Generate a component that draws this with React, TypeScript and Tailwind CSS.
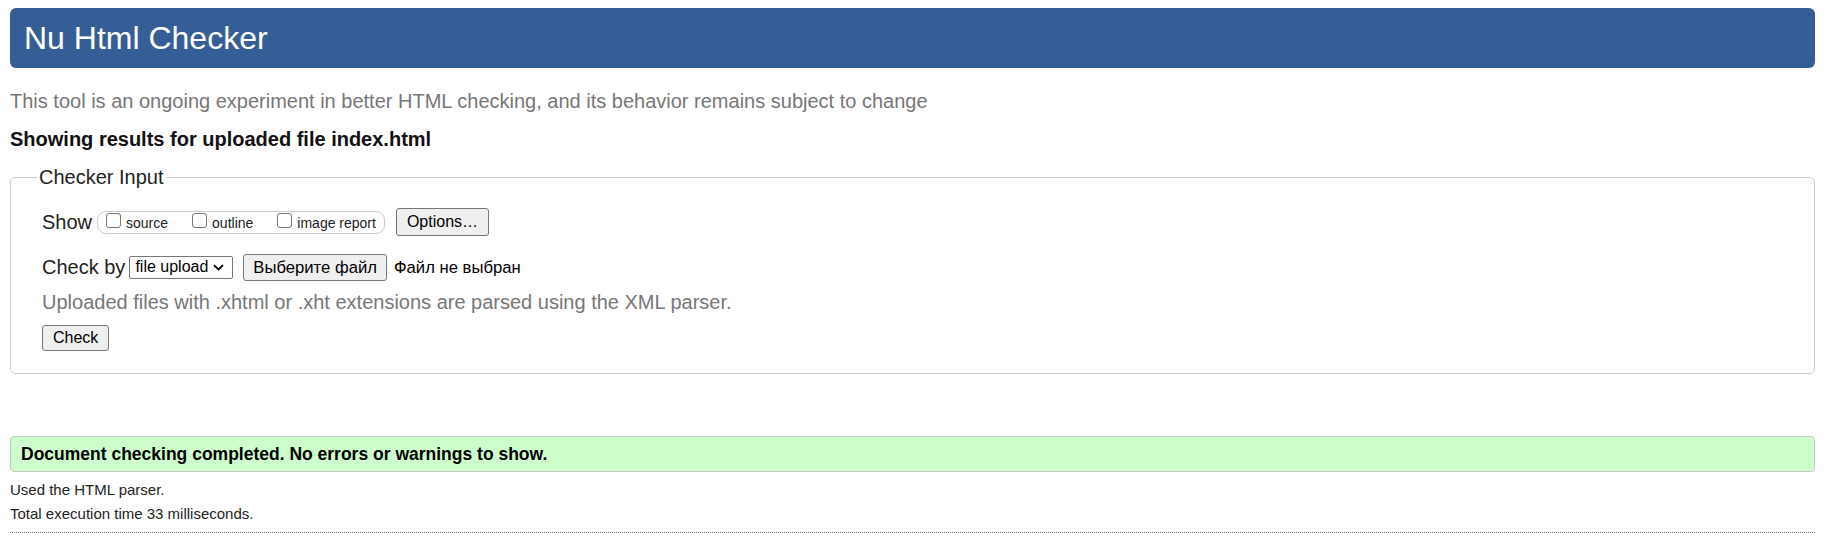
import { useState } from 'react';

export default function App() {
  const [show, setShow] = useState({ source: false, outline: false, image: false });

  return (
    <div className="min-h-screen bg-white pl-[10px] pr-[18px] pt-[8px] font-['Liberation_Sans',Arial,sans-serif] text-[#222]">
      {/* Header */}
      <header className="flex h-[60px] items-center rounded-[6px] bg-[#365e96] px-[14px]">
        <h1 className="text-[32px] font-normal leading-none text-white">Nu Html Checker</h1>
      </header>

      <p className="mt-[22px] text-[20px] leading-[23px] text-[#777]">
        This tool is an ongoing experiment in better HTML checking, and its behavior remains subject to change
      </p>
      <p className="mt-[15px] text-[20px] font-bold leading-[23px] text-[#111]">Showing results for uploaded file index.html</p>

      {/* Checker Input */}
      <fieldset className="mt-[15px] rounded-[5px] border border-[#ccc] px-[31px] pb-[22px]">
        <legend className="-ml-[5px] px-[2px] text-[20px] leading-[23px]">Checker Input</legend>

        <div className="mt-[19px] flex h-[28px] items-center">
          <span className="text-[20px] leading-[23px]">Show</span>
          <div className="ml-[5px] flex h-[23px] items-center rounded-[9px] border border-[#ccc] px-[8px] text-[14px] leading-[16px]">
            {([
              ['source', 'source'],
              ['outline', 'outline'],
              ['image', 'image report'],
            ] as const).map(([key, label], idx) => (
              <label key={key} className={`flex items-center ${idx > 0 ? 'ml-[24px]' : ''}`}>
                <input
                  type="checkbox"
                  checked={show[key]}
                  onChange={() => setShow({ ...show, [key]: !show[key] })}
                  className="-mt-[4px] h-[15px] w-[15px] appearance-none rounded-[3px] border border-[#767676] bg-white"
                />
                <span className="ml-[5px] mt-[2px]">{label}</span>
              </label>
            ))}
          </div>
          <button className="ml-[11px] h-[28px] rounded-[3px] border border-[#767676] bg-[#efefef] px-[10px] text-[16px] text-black">
            Options…
          </button>
        </div>

        <div className="mt-[18px] flex h-[26px] items-center">
          <span className="text-[20px] leading-[23px]">Check by</span>
          <div className="ml-[4px] flex h-[23px] items-center rounded-[2px] border border-[#767676] bg-white pl-[5px] pr-[8px] text-[16px] text-black">
            file upload
            <svg className="ml-[5px]" width="11" height="7" viewBox="0 0 11 7" fill="none">
              <path d="M1 1.2 5.5 5.5 10 1.2" stroke="#000" strokeWidth="1.8" />
            </svg>
          </div>
          <button className="ml-[10px] h-[27px] rounded-[3px] border border-[#767676] bg-[#efefef] px-[9px] text-[16.67px] text-black">
            Выберите файл
          </button>
          <span className="ml-[7px] text-[16.67px] text-black">Файл не выбран</span>
        </div>

        <p className="mt-[11px] text-[20px] leading-[23px] text-[#777]">
          Uploaded files with .xhtml or .xht extensions are parsed using the XML parser.
        </p>

        <button className="mt-[11px] h-[26px] rounded-[3px] border border-[#767676] bg-[#efefef] px-[10px] text-[16px] text-black">
          Check
        </button>
      </fieldset>

      {/* Result */}
      <div className="mt-[62px] flex h-[36px] items-center rounded-[4px] border border-[#c8c8c8] bg-[#ccffcc] px-[10px] text-[17.5px] font-bold text-black">
        Document checking completed. No errors or warnings to show.
      </div>

      <p className="mt-[9px] text-[15px] leading-[17px] text-[#222]">Used the HTML parser.</p>
      <p className="mt-[7px] text-[15px] leading-[17px] text-[#222]">Total execution time 33 milliseconds.</p>
      <div className="mt-[10px] border-t border-dotted border-[#777]" />
    </div>
  );
}
